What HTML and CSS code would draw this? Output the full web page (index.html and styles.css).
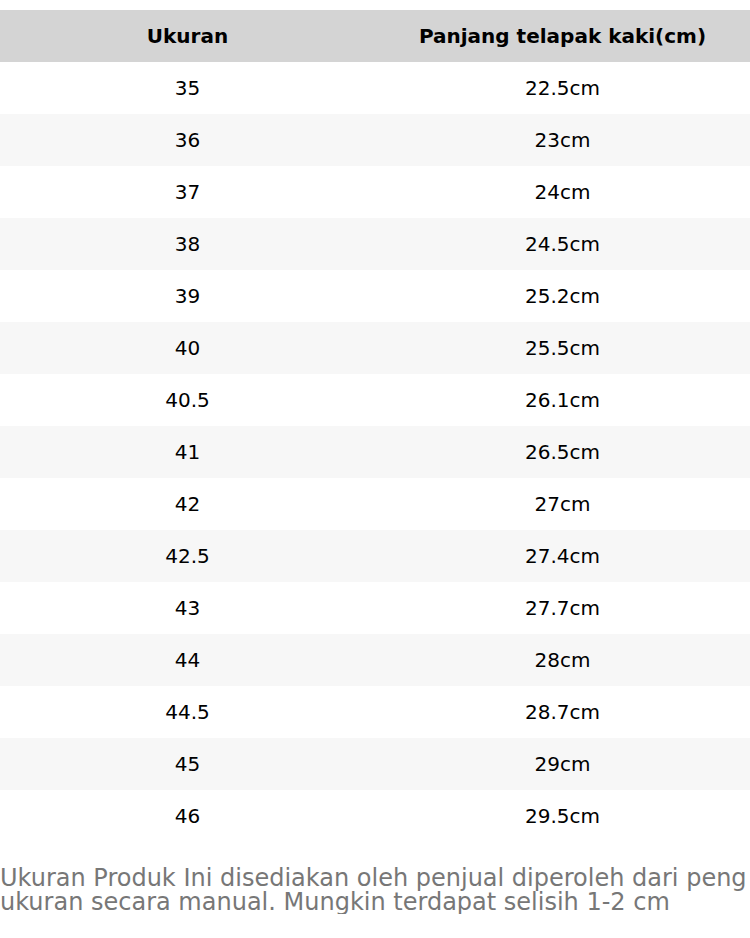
FILE: index.html
```html
<!DOCTYPE html>
<html>
<head>
<meta charset="utf-8">
<link rel="stylesheet" href="styles.css">
</head>
<body>
<div class="wrap">
<table class="size-table">
<thead>
<tr><th>Ukuran</th><th>Panjang telapak kaki(cm)</th></tr>
</thead>
<tbody>
<tr><td>35</td><td>22.5cm</td></tr>
<tr><td>36</td><td>23cm</td></tr>
<tr><td>37</td><td>24cm</td></tr>
<tr><td>38</td><td>24.5cm</td></tr>
<tr><td>39</td><td>25.2cm</td></tr>
<tr><td>40</td><td>25.5cm</td></tr>
<tr><td>40.5</td><td>26.1cm</td></tr>
<tr><td>41</td><td>26.5cm</td></tr>
<tr><td>42</td><td>27cm</td></tr>
<tr><td>42.5</td><td>27.4cm</td></tr>
<tr><td>43</td><td>27.7cm</td></tr>
<tr><td>44</td><td>28cm</td></tr>
<tr><td>44.5</td><td>28.7cm</td></tr>
<tr><td>45</td><td>29cm</td></tr>
<tr><td>46</td><td>29.5cm</td></tr>
</tbody>
</table>
<p class="note">Ukuran Produk Ini disediakan oleh penjual diperoleh dari pengukuran secara manual. Mungkin terdapat selisih 1-2 cm</p>
</div>
</body>
</html>
```
FILE: styles.css
```css
html, body {
  margin: 0;
  padding: 0;
  background: #fff;
}
.wrap {
  width: 750px;
  padding-top: 10px;
  font-family: "DejaVu Sans", sans-serif;
}
.size-table {
  width: 750px;
  border-collapse: collapse;
  table-layout: fixed;
}
.size-table th,
.size-table td {
  height: 52px;
  padding: 0;
  text-align: center;
  vertical-align: middle;
  font-size: 20px;
  color: #000;
}
.size-table th {
  background: #d4d4d4;
  font-weight: bold;
}
.size-table tbody tr:nth-child(even) td {
  background: #f7f7f7;
}
.note {
  margin: 24px 0 0;
  font-size: 24px;
  line-height: 24px;
  color: #777;
  word-break: break-all;
}
```
